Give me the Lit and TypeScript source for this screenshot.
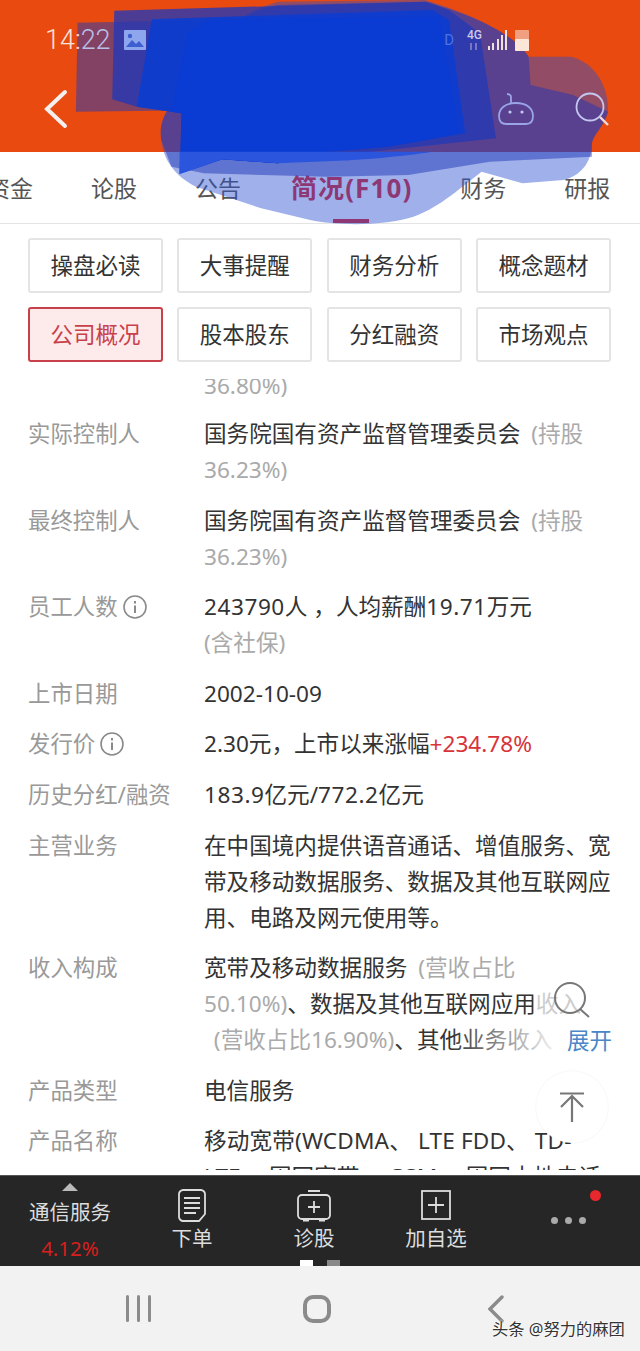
import { LitElement, html, css, svg } from "lit";
import { customElement } from "lit/decorators.js";

const tabs = ["资金", "论股", "公告", "简况(F10)", "财务", "研报"];
const buttons = ["操盘必读", "大事提醒", "财务分析", "概念题材", "公司概况", "股本股东", "分红融资", "市场观点"];

// 涂抹层的坐标取自放大图 (1568x720 → 640x240)
const smear = svg`
  <path fill="#2a4fd0" fill-opacity=".45" d="M395 420 C385 330 440 300 500 170 C540 90 590 40 680 5 L1040 0 C1150 40 1260 100 1295 170 L1400 170 C1460 190 1490 260 1490 330 C1480 380 1455 400 1450 430 C1450 490 1420 530 1380 540 L1280 550 L1180 515 C1120 570 1070 630 1000 655 C920 680 820 675 760 660 L640 625 L480 560 C430 530 400 480 395 420 Z"/>
  <path fill="#1f35b8" fill-opacity=".5" d="M395 420 C385 330 440 300 500 170 C540 90 590 40 680 15 L1040 5 C1150 40 1260 100 1295 170 L1300 255 L1404 285 L1490 335 C1480 380 1455 400 1450 430 L1450 470 L1200 485 L1000 525 L800 530 L500 520 L420 500 Z"/>
  <path fill="#2f3aa8" fill-opacity=".55" d="M190 68 L520 60 L520 330 L186 335 Z"/>
  <path fill="#2438b4" fill-opacity=".8" d="M280 32 L1045 5 L1100 30 L1176 100 L1215 415 L950 450 L680 490 L545 478 L440 520 L445 340 L335 320 L275 298 Z"/>
  <path fill="#0c3dd0" fill-opacity=".9" d="M372 58 L1060 30 L1100 60 L1140 400 L950 440 L760 460 L680 490 L545 478 L440 522 L445 340 L335 320 Z"/>
  <path fill="#0a3bd2" d="M510 60 L1075 50 L1125 400 L950 440 L760 460 L680 490 L545 478 L540 460 L445 455 L445 340 L420 335 L460 100 Z"/>
  <path fill="#2a55dc" d="M440 455 L1060 455 C980 470 880 480 830 482 L680 490 L545 478 L440 522 Z"/>
`;

type Part = [string, string?];

const rows: { label: string; info?: boolean; lines: Part[][] }[] = [
  { label: "", lines: [[["36.80%)", "muted"]]] },
  { label: "实际控制人", lines: [[["国务院国有资产监督管理委员会"], [" (持股", "muted sp"]], [["36.23%)", "muted"]]] },
  { label: "最终控制人", lines: [[["国务院国有资产监督管理委员会"], [" (持股", "muted sp"]], [["36.23%)", "muted"]]] },
  {
    label: "员工人数",
    info: true,
    lines: [[["243790", "num"], ["人 ，人均薪酬"], ["19.71", "num"], ["万元"]], [["(含社保)", "muted"]]],
  },
  { label: "上市日期", lines: [[["2002-10-09"]]] },
  { label: "发行价", info: true, lines: [[["2.30元，上市以来涨幅"], ["+234.78%", "red"]]] },
  { label: "历史分红/融资", lines: [[["183.9", "num"], ["亿元/"], ["772.2", "num"], ["亿元"]]] },
  {
    label: "主营业务",
    lines: [[["在中国境内提供语音通话、增值服务、宽"]], [["带及移动数据服务、数据及其他互联网应"]], [["用、电路及网元使用等。"]]],
  },
  {
    label: "收入构成",
    lines: [
      [["宽带及移动数据服务"], [" (营收占比", "muted sp"]],
      [["50.10%)", "muted"], ["、数据及其他互联网应用"], ["收入", "pale"]],
      [[" (营收占比16.90%)", "muted indent"], ["、其他业务收入"]],
    ],
  },
  { label: "产品类型", lines: [[["电信服务"]]] },
  {
    label: "产品名称",
    lines: [[["移动宽带(WCDMA、 LTE FDD、 TD-", "loose"]], [["LTE、 固网宽带、 GSM、 固网本地电话"]]],
  },
];

@customElement("app-root")
export class AppRoot extends LitElement {
  static styles = css`
    :host {
      display: block;
      width: 640px;
      height: 1351px;
      position: relative;
      overflow: hidden;
      background: #fff;
      font-family: "Noto Sans", "Noto Sans CJK SC", sans-serif;
      color: #333;
    }
    .page {
      display: flex;
      flex-direction: column;
      height: 1351px;
    }
    .header {
      flex: none;
      height: 152px;
      box-sizing: border-box;
      background: #e84a10;
      padding-top: 24px;
      display: flex;
      flex-direction: column;
    }
    .status {
      height: 32px;
      padding: 0 109px 0 45px;
      display: flex;
      align-items: center;
      gap: 13px;
      font-family: Roboto, sans-serif;
      font-size: 27px;
      font-weight: 300;
    }
    .status .grow {
      flex: 1;
    }
    .over {
      position: relative;
      z-index: 3;
    }
    .time {
      color: #f6e4dc;
    }
    .time b {
      font-weight: 300;
      color: #b8bfe8;
    }
    .hd {
      font-size: 15px;
      font-weight: 400;
      color: #4a74e0;
    }
    .actions {
      margin-top: 33px;
      padding: 0 31px 0 44px;
      display: flex;
      align-items: center;
    }
    .actions .robot {
      margin-left: auto;
      margin-right: 41px;
    }
    .tabs {
      flex: none;
      height: 72px;
      box-sizing: border-box;
      border-bottom: 1px solid #e4e4e4;
      display: flex;
      margin-left: -42px;
      white-space: nowrap;
    }
    .tab {
      flex: none;
      position: relative;
      padding: 0 29px;
      font-size: 23px;
      line-height: 72px;
      color: #555;
    }
    .tab.on {
      padding: 0 19px 0 21px;
      font-size: 26px;
      font-weight: 700;
      letter-spacing: 1.1px;
      color: #e0232a;
    }
    .tab.on::after {
      content: "";
      position: absolute;
      left: 63px;
      bottom: 0;
      width: 36px;
      height: 4px;
      background: #e0232a;
    }
    .btns {
      flex: none;
      display: grid;
      grid-template-columns: repeat(4, 135px);
      grid-auto-rows: 55px;
      gap: 14px 14.33px;
      padding: 14px 0 17px 28px;
    }
    .btn {
      box-sizing: border-box;
      border: 2px solid #e4e4e4;
      border-radius: 3px;
      padding-bottom: 3px;
      display: flex;
      align-items: center;
      justify-content: center;
      font-size: 22.5px;
      color: #333;
    }
    .btn.on {
      background: #fdeaea;
      border-color: #c8404a;
      color: #c8404a;
    }
    .list {
      flex: 1;
      min-height: 0;
      margin-bottom: 5px;
      overflow: hidden;
      position: relative;
    }
    .rows {
      margin-top: -11px;
      display: flex;
      flex-direction: column;
      gap: 14.6px;
      font-size: 22.6px;
      line-height: 36px;
    }
    .row {
      display: flex;
    }
    .row:first-child {
      margin-bottom: -2.6px;
    }
    .label {
      flex: none;
      width: 176px;
      padding-left: 28px;
      box-sizing: border-box;
      color: #999;
      display: flex;
      align-items: flex-start;
      gap: 5px;
      white-space: nowrap;
      font-size: 22.4px;
    }
    .label svg {
      margin-top: 6px;
    }
    .value {
      flex: none;
      width: 464px;
      box-sizing: border-box;
      padding-left: 28px;
      color: #333;
    }
    .line {
      white-space: pre;
    }
    .muted {
      color: #aaa;
    }
    .sp {
      margin-left: 5px;
    }
    .indent {
      margin-left: 4px;
    }
    .num {
      letter-spacing: 0.55px;
    }
    .loose {
      letter-spacing: 0.15px;
    }
    .pale {
      color: #ccc;
    }
    .red {
      color: #d9333a;
    }
    .fade {
      position: absolute;
      left: 450px;
      top: 643px;
      width: 112px;
      height: 36px;
      background: linear-gradient(90deg, rgba(255, 255, 255, 0), #fff);
    }
    .expand {
      position: absolute;
      right: 28px;
      top: 644px;
      font-size: 22.5px;
      line-height: 36px;
      color: #4a86c8;
      background: #fff;
    }
    .lens {
      position: absolute;
      left: 553px;
      top: 602px;
    }
    .top-btn {
      position: absolute;
      left: 536px;
      top: 692px;
      width: 72px;
      height: 72px;
      border-radius: 50%;
      background: #fff;
      box-shadow: 0 0 2px rgba(0, 0, 0, 0.08);
      display: flex;
      align-items: center;
      justify-content: center;
    }
    .bar {
      flex: none;
      height: 91px;
      background: #262626;
      border-top: 1px solid #555;
      box-sizing: border-box;
      position: relative;
      display: grid;
      grid-template-columns: repeat(5, 122px);
      padding-left: 9px;
      color: #ddd;
      text-align: center;
    }
    .cell {
      display: flex;
      flex-direction: column;
      align-items: center;
      font-size: 20.5px;
      line-height: 28px;
    }
    .cell svg {
      display: block;
    }
    .cell.icon {
      padding-top: 13px;
      gap: 2px;
    }
    .sector {
      padding-top: 7px;
    }
    .tri {
      width: 0;
      height: 0;
      border-left: 8px solid transparent;
      border-right: 8px solid transparent;
      border-bottom: 8px solid #bbb;
    }
    .sector .name {
      margin-top: 7px;
    }
    .sector .pct {
      margin-top: 8px;
      color: #d81e1e;
    }
    .cell.dots {
      padding: 41px 0 0 20px;
      flex-direction: row;
      align-items: flex-start;
      justify-content: center;
      gap: 7px;
    }
    .dots i {
      width: 7px;
      height: 7px;
      border-radius: 50%;
      background: #aaa;
    }
    .badge {
      position: absolute;
      left: 590px;
      top: 14px;
      width: 11px;
      height: 11px;
      border-radius: 50%;
      background: #e8282c;
    }
    .pager {
      position: absolute;
      left: 300px;
      bottom: 0;
      display: flex;
      gap: 14px;
    }
    .pager i {
      width: 13px;
      height: 6px;
      background: #888;
    }
    .pager i.on {
      background: #fff;
    }
    .nav {
      flex: none;
      height: 85px;
      background: #f2f2f2;
      position: relative;
      display: flex;
      align-items: flex-start;
      padding-top: 29px;
      box-sizing: border-box;
    }
    .nav .three {
      margin-left: 126px;
      display: flex;
      gap: 8px;
    }
    .nav .three i {
      width: 3px;
      height: 27px;
      border-radius: 2px;
      background: #8b8b8b;
    }
    .nav .home {
      margin-left: 152px;
      width: 28px;
      height: 28px;
      box-sizing: border-box;
      border: 4px solid #8b8b8b;
      border-radius: 10px;
    }
    .nav .back {
      margin-left: 157px;
    }
    .mark {
      position: absolute;
      left: 492px;
      top: 52px;
      font-size: 16.3px;
      line-height: 22px;
      color: #333;
      white-space: nowrap;
      text-shadow: 0 0 2px #fff, 0 0 2px #fff;
    }
    .smear {
      position: absolute;
      left: 0;
      top: 0;
      width: 640px;
      height: 240px;
      pointer-events: none;
      z-index: 2;
    }
  `;

  infoIcon() {
    return html`<svg width="24" height="24" viewBox="0 0 24 24" fill="none" stroke="#8a8a8a" stroke-width="1.6">
      <circle cx="12" cy="12" r="11"></circle>
      <path d="M12 10.5V18M12 6v2.4" stroke-width="2"></path>
    </svg>`;
  }

  renderRow(r: (typeof rows)[number]) {
    return html`<div class="row">
      <div class="label">${r.label}${r.info ? this.infoIcon() : ""}</div>
      <div class="value">
        ${r.lines.map(
          (l) => html`<div class="line">${l.map(([t, c]) => (c ? html`<span class=${c}>${t}</span>` : t))}</div>`
        )}
      </div>
    </div>`;
  }

  render() {
    return html`
      <div class="page">
        <div class="header">
          <div class="status">
            <span class="time over">14:<b>22</b></span>
            <svg class="over" width="22" height="20" viewBox="0 0 22 20">
              <rect width="22" height="20" rx="1" fill="#8ea6ee"></rect>
              <path d="M2 17l6-7 4 4 3-3 5 6z" fill="#3d5fd0"></path>
              <circle cx="6" cy="6" r="2.2" fill="#3d5fd0"></circle>
            </svg>
            <span class="grow"></span>
            <span class="hd over">D</span>
            <svg class="over" width="64" height="24" viewBox="0 0 64 24" fill="#efe0dc">
              <text x="0" y="11" font-size="12" font-family="Roboto, sans-serif" font-weight="500" fill="#cfc8e4">4G</text>
              <path d="M4 15v7M9 22v-7" stroke="#8e86c6" stroke-width="1.6"></path>
              <rect x="21" y="18" width="2" height="4"></rect>
              <rect x="25" y="15" width="2" height="7"></rect>
              <rect x="30" y="11" width="2" height="11"></rect>
              <rect x="34" y="7" width="2" height="15"></rect>
              <rect x="38" y="2" width="2" height="20"></rect>
              <rect x="48" y="2" width="14" height="21" rx="1" fill="#f0a080"></rect>
              <rect x="48" y="11" width="14" height="12" rx="1" fill="#fbe6d8"></rect>
            </svg>
          </div>
          <div class="actions">
            <svg width="24" height="40" viewBox="0 0 24 40" fill="none" stroke="#f5f0f0" stroke-width="4" stroke-linecap="round">
              <path d="M21 3L3 20l18 17"></path>
            </svg>
            <svg class="robot over" width="36" height="34" viewBox="0 0 36 34" fill="none" stroke="#9aa4e8" stroke-width="1.8">
              <path d="M1 24c0-8 7-13 17-13s17 5 17 13c0 6-3 8-7 8H8c-4 0-7-2-7-8z"></path>
              <path d="M13 11V5c0-2-2-3-4-3"></path>
              <circle cx="12" cy="20" r="1.6" fill="#c4c8f0" stroke="none"></circle>
              <circle cx="24" cy="20" r="1.6" fill="#c4c8f0" stroke="none"></circle>
            </svg>
            <svg class="over" width="34" height="34" viewBox="0 0 34 34" fill="none" stroke="#c4c8f0" stroke-width="1.8">
              <circle cx="15" cy="15" r="13.5"></circle>
              <path d="M25 25l8 8" stroke="#f2dcd8" stroke-width="2.4"></path>
            </svg>
          </div>
        </div>

        <div class="tabs">
          ${tabs.map((t) => html`<div class="tab ${t.startsWith("简况") ? "on" : ""}">${t}</div>`)}
        </div>

        <div class="btns">
          ${buttons.map((b) => html`<div class="btn ${b === "公司概况" ? "on" : ""}">${b}</div>`)}
        </div>

        <div class="list">
          <div class="rows">${rows.map((r) => this.renderRow(r))}</div>
          <div class="fade"></div>
          <div class="expand">展开</div>
          <svg class="lens" width="38" height="38" viewBox="0 0 38 38" fill="none" stroke="#777" stroke-width="2">
            <circle cx="17" cy="17" r="15"></circle>
            <path d="M27 28l9 8"></path>
          </svg>
          <div class="top-btn">
            <svg width="26" height="30" viewBox="0 0 26 30" fill="none" stroke="#777" stroke-width="2.2">
              <path d="M1 1.5h24M13 30V4M2 15L13 4l11 11"></path>
            </svg>
          </div>
        </div>

        <div class="bar">
          <div class="cell sector">
            <div class="tri"></div>
            <div class="name">通信服务</div>
            <div class="pct">4.12%</div>
          </div>
          <div class="cell icon">
            <svg width="28" height="33" viewBox="0 0 28 33" fill="none" stroke="#ddd" stroke-width="1.8">
              <path d="M5 1h18c2 0 4 2 4 4v20l-6 7H5c-2 0-4-2-4-4V5c0-2 2-4 4-4z"></path>
              <path d="M6 9h16M6 14h16M6 19h16M6 24h12"></path>
            </svg>
            下单
          </div>
          <div class="cell icon">
            <svg width="34" height="33" viewBox="0 0 34 33" fill="none" stroke="#ddd" stroke-width="1.8">
              <rect x="1" y="6" width="32" height="24" rx="4"></rect>
              <path d="M11 2h12M17 12v12M11 18h12"></path>
              <path d="M6 31h6M22 31h6" stroke-width="3"></path>
            </svg>
            诊股
          </div>
          <div class="cell icon">
            <svg width="30" height="33" viewBox="0 0 30 33" fill="none" stroke="#ddd" stroke-width="1.8">
              <rect x="1" y="2" width="28" height="28"></rect>
              <path d="M15 8v16M7 16h16"></path>
            </svg>
            加自选
          </div>
          <div class="cell dots"><i></i><i></i><i></i></div>
          <div class="badge"></div>
          <div class="pager"><i class="on"></i><i></i></div>
        </div>

        <div class="nav">
          <div class="three"><i></i><i></i><i></i></div>
          <div class="home"></div>
          <svg class="back" width="16" height="28" viewBox="0 0 16 28" fill="none" stroke="#8b8b8b" stroke-width="3.4" stroke-linecap="round">
            <path d="M14 2L2 14l12 12"></path>
          </svg>
          <div class="mark">头条 @努力的麻团</div>
        </div>
      </div>

      <svg class="smear" viewBox="0 0 1568 720" preserveAspectRatio="none">${smear}</svg>
    `;
  }
}
